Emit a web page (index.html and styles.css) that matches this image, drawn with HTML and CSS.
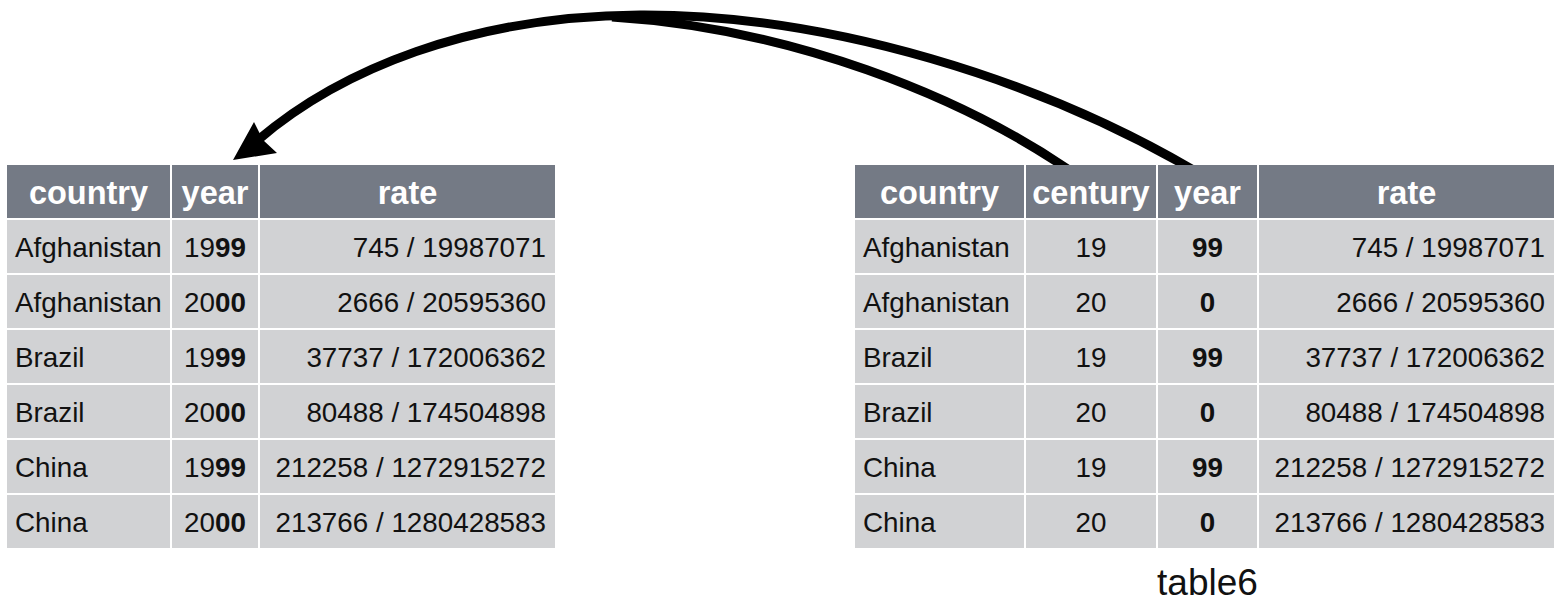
FILE: index.html
```html
<!DOCTYPE html>
<html>
<head>
<meta charset="utf-8">
<link rel="stylesheet" href="styles.css">
</head>
<body>
<div class="page">
  <svg class="arrows" width="1558" height="608" viewBox="0 0 1558 608">
    <defs>
      <clipPath id="above">
        <rect x="0" y="0" width="1558" height="165"/>
      </clipPath>
    </defs>
    <g clip-path="url(#above)">
      <path d="M1195,171 C1040,80 830,14 640,15 C470,16 340,70 258,140" fill="none" stroke="#000" stroke-width="9"/>
      <path d="M1072,172 C960,95 790,28 612,17" fill="none" stroke="#000" stroke-width="9"/>
    </g>
    <polygon points="233,160 254,122 263,140 277,153" fill="#000"/>
  </svg>
  <div class="tables">
    <div class="tbl tbl-left">
      <div class="th">country</div><div class="th">year</div><div class="th">rate</div>
      <div class="td">Afghanistan</div><div class="td c">19<b>99</b></div><div class="td r">745 / 19987071</div>
      <div class="td">Afghanistan</div><div class="td c">20<b>00</b></div><div class="td r">2666 / 20595360</div>
      <div class="td">Brazil</div><div class="td c">19<b>99</b></div><div class="td r">37737 / 172006362</div>
      <div class="td">Brazil</div><div class="td c">20<b>00</b></div><div class="td r">80488 / 174504898</div>
      <div class="td">China</div><div class="td c">19<b>99</b></div><div class="td r">212258 / 1272915272</div>
      <div class="td">China</div><div class="td c">20<b>00</b></div><div class="td r">213766 / 1280428583</div>
    </div>
    <div class="right-wrap">
      <div class="tbl tbl-right">
        <div class="th">country</div><div class="th">century</div><div class="th">year</div><div class="th">rate</div>
        <div class="td">Afghanistan</div><div class="td c">19</div><div class="td c"><b>99</b></div><div class="td r">745 / 19987071</div>
        <div class="td">Afghanistan</div><div class="td c">20</div><div class="td c"><b>0</b></div><div class="td r">2666 / 20595360</div>
        <div class="td">Brazil</div><div class="td c">19</div><div class="td c"><b>99</b></div><div class="td r">37737 / 172006362</div>
        <div class="td">Brazil</div><div class="td c">20</div><div class="td c"><b>0</b></div><div class="td r">80488 / 174504898</div>
        <div class="td">China</div><div class="td c">19</div><div class="td c"><b>99</b></div><div class="td r">212258 / 1272915272</div>
        <div class="td">China</div><div class="td c">20</div><div class="td c"><b>0</b></div><div class="td r">213766 / 1280428583</div>
      </div>
      <div class="caption-row">
        <div></div><div></div><div class="caption">table6</div><div></div>
      </div>
    </div>
  </div>
</div>
</body>
</html>
```

FILE: styles.css
```css
html, body {
  margin: 0;
  padding: 0;
  background: #fff;
}
body {
  font-family: "Liberation Sans", Arial, Helvetica, sans-serif;
  color: #111;
}
.page {
  position: relative;
  width: 1558px;
  height: 608px;
  overflow: hidden;
}
.arrows {
  position: absolute;
  left: 0;
  top: 0;
  pointer-events: none;
}
.tables {
  display: flex;
  gap: 300px;
  padding-top: 165px;
  padding-left: 7px;
  align-items: flex-start;
}
.tbl {
  display: grid;
  gap: 2px;
  grid-auto-rows: 53px;
  background: #fff;
}
.tbl-left {
  grid-template-columns: 163px 86px 295px;
}
.tbl-right, .caption-row {
  grid-template-columns: 169px 130px 99px 295px;
}
.caption-row {
  display: grid;
  column-gap: 2px;
}
.th {
  background: #747a85;
  color: #fff;
  font-weight: bold;
  font-size: 32.5px;
  display: flex;
  align-items: center;
  justify-content: center;
  padding-top: 3px;
}
.td {
  background: #d1d2d4;
  font-size: 27.8px;
  display: flex;
  align-items: center;
  padding: 3px 9px 0 8px;
  white-space: nowrap;
}
.td.c {
  justify-content: center;
  padding: 3px 0 0 0;
}
.td.r {
  justify-content: flex-end;
}
.td b {
  font-weight: bold;
}
.caption {
  font-size: 37px;
  text-align: center;
  white-space: nowrap;
  display: flex;
  justify-content: center;
  margin-top: 14px;
  color: #111;
}
```
